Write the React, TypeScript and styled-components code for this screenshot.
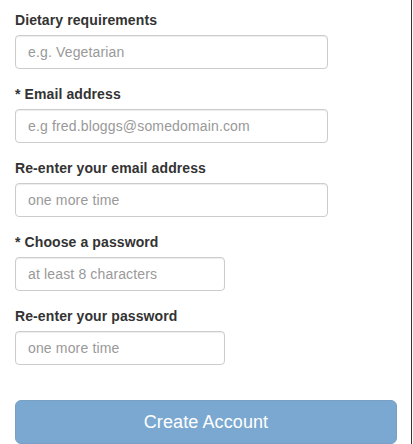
import React from "react";
import styled, { createGlobalStyle } from "styled-components";

const GlobalStyle = createGlobalStyle`
  html, body { margin: 0; padding: 0; background: #fff; }
  body {
    font-family: "Liberation Sans", Arial, Helvetica, sans-serif;
    font-size: 14px;
    line-height: 1.428571;
    color: #333;
  }
  * { box-sizing: border-box; }
`;

const Panel = styled.div`
  width: 412px;
  min-height: 444px;
  border-right: 1px solid #333;
  padding: 10px 14px 0 15px;
`;

const Form = styled.form`
  display: flex;
  flex-direction: column;
`;

const Group = styled.div`
  display: flex;
  flex-direction: column;
  align-items: flex-start;
  margin-bottom: 15px;
`;

const Label = styled.label`
  display: block;
  font-weight: bold;
  font-size: 14px;
  line-height: 20px;
  letter-spacing: 0.1px;
  margin-bottom: 5px;
  color: #333;
`;

const Input = styled.input<{ $w: number }>`
  display: block;
  width: ${(p) => p.$w}px;
  height: 34px;
  padding: 6px 12px;
  font-family: inherit;
  font-size: 14px;
  line-height: 20px;
  letter-spacing: 0.15px;
  color: #555;
  background: #fff;
  border: 1px solid #ccc;
  border-radius: 4px;
  box-shadow: inset 0 1px 1px rgba(0, 0, 0, 0.075);
  outline: none;
  &::placeholder { color: #999; opacity: 1; }
`;

const Submit = styled.button`
  margin-top: 20px;
  width: 100%;
  height: 44px;
  padding: 0 16px;
  font-family: inherit;
  font-size: 18px;
  line-height: 42px;
  letter-spacing: 0.1px;
  color: #fff;
  background: #7aa8d0;
  border: 1px solid #77a0c4;
  border-radius: 6px;
  cursor: not-allowed;
`;

const fields = [
  { label: "Dietary requirements", ph: "e.g. Vegetarian", w: 313, type: "text" },
  { label: "* Email address", ph: "e.g fred.bloggs@somedomain.com", w: 313, type: "email" },
  { label: "Re-enter your email address", ph: "one more time", w: 313, type: "email" },
  { label: "* Choose a password", ph: "at least 8 characters", w: 210, type: "password" },
  { label: "Re-enter your password", ph: "one more time", w: 210, type: "password" },
];

export default function App() {
  return (
    <>
      <GlobalStyle />
      <Panel>
        <Form onSubmit={(e) => e.preventDefault()}>
          {fields.map((f, i) => (
            <Group key={i}>
              <Label htmlFor={`f${i}`}>{f.label}</Label>
              <Input id={`f${i}`} type={f.type} placeholder={f.ph} $w={f.w} />
            </Group>
          ))}
          <Submit type="submit" disabled>
            Create Account
          </Submit>
        </Form>
      </Panel>
    </>
  );
}
